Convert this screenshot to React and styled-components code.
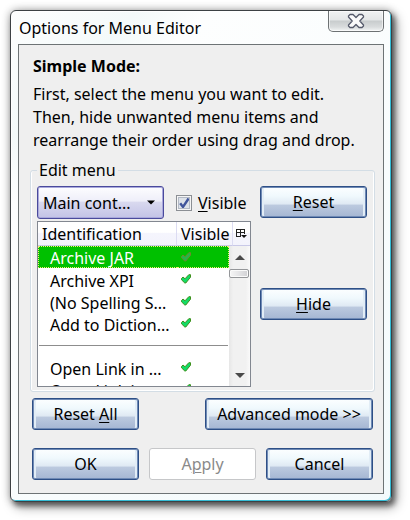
import React from "react";
import styled, { createGlobalStyle, css } from "styled-components";

const GlobalStyle = createGlobalStyle`
  * { box-sizing: border-box; }
  body {
    margin: 0;
    background: #fff;
    color: #000;
    font: 16px/22px "Noto Sans", "Open Sans", sans-serif;
  }
  button, select, input { font: inherit; color: inherit; margin: 0; }
  u { text-underline-offset: 2px; text-decoration-thickness: 1px; }
`;

const Desktop = styled.main`
  padding: 10px 18px 18px 10px;
`;

const Dialog = styled.section`
  padding: 0 7px 7px;
  border: 1px solid #3c4144;
  border-radius: 6px;
  background: linear-gradient(135deg, #fdfefe 0, #f4fafa 90px, #fdfefe 140px, #f3fafc 100%);
  box-shadow:
    inset -1px -1px 0 #35bdd6,
    inset 1px 1px 0 #fff,
    3px 4px 5px rgba(0, 0, 0, 0.4),
    4px 5px 12px rgba(0, 0, 0, 0.4),
    0 0 9px rgba(0, 0, 0, 0.3);
`;

const TitleBar = styled.header`
  display: flex;
  justify-content: space-between;
  align-items: flex-start;
  height: 33px;
`;

const Title = styled.h1`
  margin: 0;
  padding: 6px 0 0 1px;
  font-size: 16px;
  font-weight: 400;
  line-height: 22px;
  white-space: nowrap;
`;

const CloseButton = styled.button`
  display: flex;
  justify-content: center;
  align-items: center;
  width: 56px;
  height: 21px;
  padding: 0;
  border: 1px solid #6d7173;
  border-top: 0;
  border-radius: 0 0 5px 5px;
  background: linear-gradient(#f0f2f3 0, #e3e6e7 45%, #c8cccd 50%, #d9dcdd 80%, #f3f5f5 100%);
  box-shadow: inset 0 0 0 1px rgba(255, 255, 255, 0.6);
`;

const Body = styled.div`
  padding: 10px 10px 13px 13px;
  border: 1px solid #6d7375;
  background: #efefef;
`;

const Heading = styled.h2`
  margin: 0 0 6px 1px;
  font-size: 16px;
  font-weight: 700;
  line-height: 22px;
`;

const Intro = styled.p`
  margin: 0 0 7px 1px;
  line-height: 23px;
  white-space: nowrap;
`;

const Group = styled.fieldset`
  min-width: 0;
  margin: 0 -2px 6px;
  padding: 5px 7px 4px 6px;
  border: 1px solid #d3dde5;
  border-radius: 3px;
  box-shadow: inset -1px -1px 0 #fff, inset 1px 0 0 #fff;
`;

const Legend = styled.legend`
  margin: 0;
  padding: 0 2px;
`;

const GroupGrid = styled.div`
  display: grid;
  grid-template-columns: minmax(0, 1fr) 107px;
  column-gap: 9px;
  row-gap: 2px;
`;

const Controls = styled.div`
  display: flex;
  align-items: center;
  gap: 12px;
`;

const SelectWrap = styled.div`
  position: relative;
  width: 127px;
  height: 33px;

  svg {
    position: absolute;
    right: 9px;
    top: 14px;
    pointer-events: none;
  }
`;

const Select = styled.select`
  appearance: none;
  width: 100%;
  height: 100%;
  padding: 0 5px;
  border: 1px solid #4a4a9c;
  border-radius: 3px;
  background: linear-gradient(#fdfdff 0, #eeeef9 46%, #d9d9ef 48%, #c3c3e6 100%);
  box-shadow: inset 0 0 0 1px #a9a9dc;
`;

const CheckLabel = styled.label`
  display: flex;
  align-items: center;
  gap: 6px;
`;

const CheckBox = styled.input`
  appearance: none;
  width: 16px;
  height: 16px;
  border: 1px solid #8b8f94;
  background: #d6dbe2;
  box-shadow: inset 0 0 0 1px #f5f5f5, inset 0 0 0 2px #b3bac5;

  &:checked {
    background: url("data:image/svg+xml,%3Csvg xmlns='http://www.w3.org/2000/svg' viewBox='0 0 14 14'%3E%3Cpath d='M3.2 7.2L6 11L11.6 2.5' fill='none' stroke='%2341569c' stroke-width='2.4'/%3E%3C/svg%3E") center / 14px no-repeat #dde2e9;
  }
`;

const Button = styled.button`
  height: 32px;
  min-width: ${(p) => (p.$wide ? "168px" : "107px")};
  padding: 0 6px 1px;
  border: 1px solid #2e4f86;
  border-radius: 3px;
  background: linear-gradient(#fcfeff 0, #f0f9fd 30%, #dfe9f3 57%, #bccadf 60%, #a5b6d3 100%);
  box-shadow: inset 0 0 0 1px #6f8ab5, inset 3px 0 0 #e2edf6, inset -3px 0 0 #e2edf6;
  white-space: nowrap;

  &:disabled {
    border-color: #c6c7c9;
    background: #fff;
    box-shadow: none;
    color: #8a8a8a;
  }
`;

const SideButton = styled.div`
  display: grid;
  align-items: center;
`;

const Tree = styled.div`
  position: relative;
  height: 166px;
  overflow: hidden;
  border: 1px solid #828790;
  background: #fff;
`;

const TreeTable = styled.table`
  width: 100%;
  table-layout: fixed;
  border-collapse: separate;
  border-spacing: 0;
`;

const HeadCell = styled.th`
  height: 24px;
  padding: 2px 0 0 4px;
  border-right: 1px solid #dcdcf2;
  border-bottom: 1px solid #c9c9e8;
  background: linear-gradient(#fff 0, #fff 45%, #f5f5fd 50%, #f3f3fc 100%);
  font-weight: 400;
  line-height: 21px;
  text-align: left;
  white-space: nowrap;

  &:last-child { padding: 0; border-right: 0; }
`;

const PickerButton = styled.button`
  display: flex;
  justify-content: center;
  align-items: center;
  width: 100%;
  height: 22px;
  padding: 0;
  border: 0;
  background: none;
`;

const Cell = styled.td`
  height: 22px;
  padding: ${(p) => (p.$mark ? "0 0 0 4px" : "4px 0 0 12px")};
  line-height: 18px;
  white-space: nowrap;

  ${(p) => p.$selected && css`
    background: #00c000 linear-gradient(90deg, #f0f070 50%, transparent 50%) 0 0 / 2px 1px repeat-x;
    border-bottom: 1px dotted #f0f070;
    border-left: ${p.$mark ? "0" : "1px dotted #f0f070"};
    border-right: ${p.$mark ? "1px dotted #f0f070" : "0"};
    color: #fff;
    line-height: 17px;
    padding-left: ${p.$mark ? "4px" : "11px"};
  `}

  svg { display: block; opacity: ${(p) => (p.$selected ? 0.8 : 1)}; }
`;

const SeparatorCell = styled.td`
  height: 22px;
  padding: 0 1px;

  hr {
    height: 1px;
    margin: 0;
    border: 0;
    background: #8d8d8d;
  }
`;

const ScrollBar = styled.div`
  position: absolute;
  top: 24px;
  right: 0;
  bottom: 0;
  display: flex;
  flex-direction: column;
  align-items: center;
  width: 21px;
  background: linear-gradient(90deg, #e6e6e6, #f1f1f1 20%, #f1f1f1 80%, #fafafa);
`;

const ScrollButton = styled.button`
  display: flex;
  justify-content: center;
  align-items: center;
  width: 100%;
  height: 22px;
  padding: 0;
  border: 0;
  background: none;
`;

const Thumb = styled.div`
  width: 20px;
  height: 9px;
  margin: 1px 1px auto 0;
  border: 1px solid #949699;
  border-radius: 2px;
  background: linear-gradient(90deg, #f6f6f6, #e6e6e8 45%, #d1d1d4);
  box-shadow: inset 0 0 0 1px #fafafa;
`;

const ButtonRow = styled.div`
  display: flex;
  justify-content: space-between;
  gap: 10px;

  & + & { margin-top: 18px; }
`;

const CloseIcon = () => (
  <svg width="18" height="16" viewBox="0 0 18 16" aria-hidden="true">
    <path
      d="M3 1.500H6L9 4.500L12 1.500H15L16.500 3V4L12.800 8L16.500 12V13L15 14.500H12L9 11.500L6 14.500H3L1.500 13V12L5.200 8L1.500 4V3Z"
      fill="#fafafa"
      stroke="#555a6b"
      strokeWidth="1.300"
      strokeLinejoin="round"
    />
  </svg>
);

const Tick = ({ muted }) => (
  <svg width="10" height="10" viewBox="0 0 10 10" aria-hidden="true">
    <path
      d="M.5 4.500L2 3L4 4.800L7.800.700H9.500V3.200L4.800 9H3.800L.5 5.800Z"
      fill={muted ? "#2fb35f" : "#12dc66"}
      stroke={muted ? "#8d7a38" : "#3f8f1c"}
      strokeWidth="1"
      strokeLinejoin="round"
    />
  </svg>
);

const Arrow = ({ up }) => (
  <svg width="10" height="5" viewBox="0 0 10 5" aria-hidden="true">
    <path d={up ? "M0 5L5 0L10 5Z" : "M0 0H10L5 5Z"} fill="#4a4a4a" />
  </svg>
);

const PickerIcon = () => (
  <svg width="11" height="10" viewBox="0 0 11 10" aria-hidden="true">
    <path d="M0 .5H9M0 3.500H9M.5 0V8M4.500 1V8M8.500 0V5M0 7.500H5" fill="none" stroke="#222" />
    <path d="M5 6H11L8 9Z" fill="#111" />
  </svg>
);

const ITEMS = [
  { label: "Archive JAR", selected: true },
  { label: "Archive XPI" },
  { label: "(No Spelling S..." },
  { label: "Add to Diction..." },
  { separator: true },
  { label: "Open Link in ..." },
  { label: "Open Link in ..." },
];

function MenuTree() {
  return (
    <Tree>
      <TreeTable>
        <colgroup>
          <col />
          <col style={{ width: 52 }} />
          <col style={{ width: 4 }} />
          <col style={{ width: 17 }} />
        </colgroup>
        <thead>
          <tr>
            <HeadCell>Identification</HeadCell>
            <HeadCell colSpan={2}>Visible</HeadCell>
            <HeadCell>
              <PickerButton aria-label="Choose columns"><PickerIcon /></PickerButton>
            </HeadCell>
          </tr>
        </thead>
        <tbody>
          {ITEMS.map((item, i) =>
            item.separator ? (
              <tr key={i}>
                <SeparatorCell colSpan={2}><hr /></SeparatorCell>
              </tr>
            ) : (
              <tr key={i} aria-selected={item.selected}>
                <Cell $selected={item.selected}>{item.label}</Cell>
                <Cell $mark $selected={item.selected}><Tick muted={item.selected} /></Cell>
              </tr>
            )
          )}
        </tbody>
      </TreeTable>
      <ScrollBar>
        <ScrollButton aria-label="Scroll up"><Arrow up /></ScrollButton>
        <Thumb />
        <ScrollButton aria-label="Scroll down"><Arrow /></ScrollButton>
      </ScrollBar>
    </Tree>
  );
}

export default function App() {
  return (
    <Desktop>
      <GlobalStyle />
      <Dialog role="dialog" aria-labelledby="dialog-title">
        <TitleBar>
          <Title id="dialog-title">Options for Menu Editor</Title>
          <CloseButton aria-label="Close"><CloseIcon /></CloseButton>
        </TitleBar>
        <Body>
          <Heading>Simple Mode:</Heading>
          <Intro>
            First, select the menu you want to edit.<br />
            Then, hide unwanted menu items and<br />
            rearrange their order using drag and drop.
          </Intro>
          <Group>
            <Legend>Edit menu</Legend>
            <GroupGrid>
              <Controls>
                <SelectWrap>
                  <Select aria-label="Menu to edit">
                    <option>Main cont...</option>
                  </Select>
                  <svg width="8" height="5" viewBox="0 0 8 5" aria-hidden="true">
                    <path d="M0 .5H8L4 4.500Z" fill="#000" />
                  </svg>
                </SelectWrap>
                <CheckLabel>
                  <CheckBox type="checkbox" defaultChecked />
                  <span><u>V</u>isible</span>
                </CheckLabel>
              </Controls>
              <Button><u>R</u>eset</Button>
              <MenuTree />
              <SideButton>
                <Button><u>H</u>ide</Button>
              </SideButton>
            </GroupGrid>
          </Group>
          <ButtonRow>
            <Button>Reset <u>A</u>ll</Button>
            <Button $wide>Advanced mode &gt;&gt;</Button>
          </ButtonRow>
          <ButtonRow>
            <Button>OK</Button>
            <Button disabled>A<u>p</u>ply</Button>
            <Button>Cancel</Button>
          </ButtonRow>
        </Body>
      </Dialog>
    </Desktop>
  );
}
